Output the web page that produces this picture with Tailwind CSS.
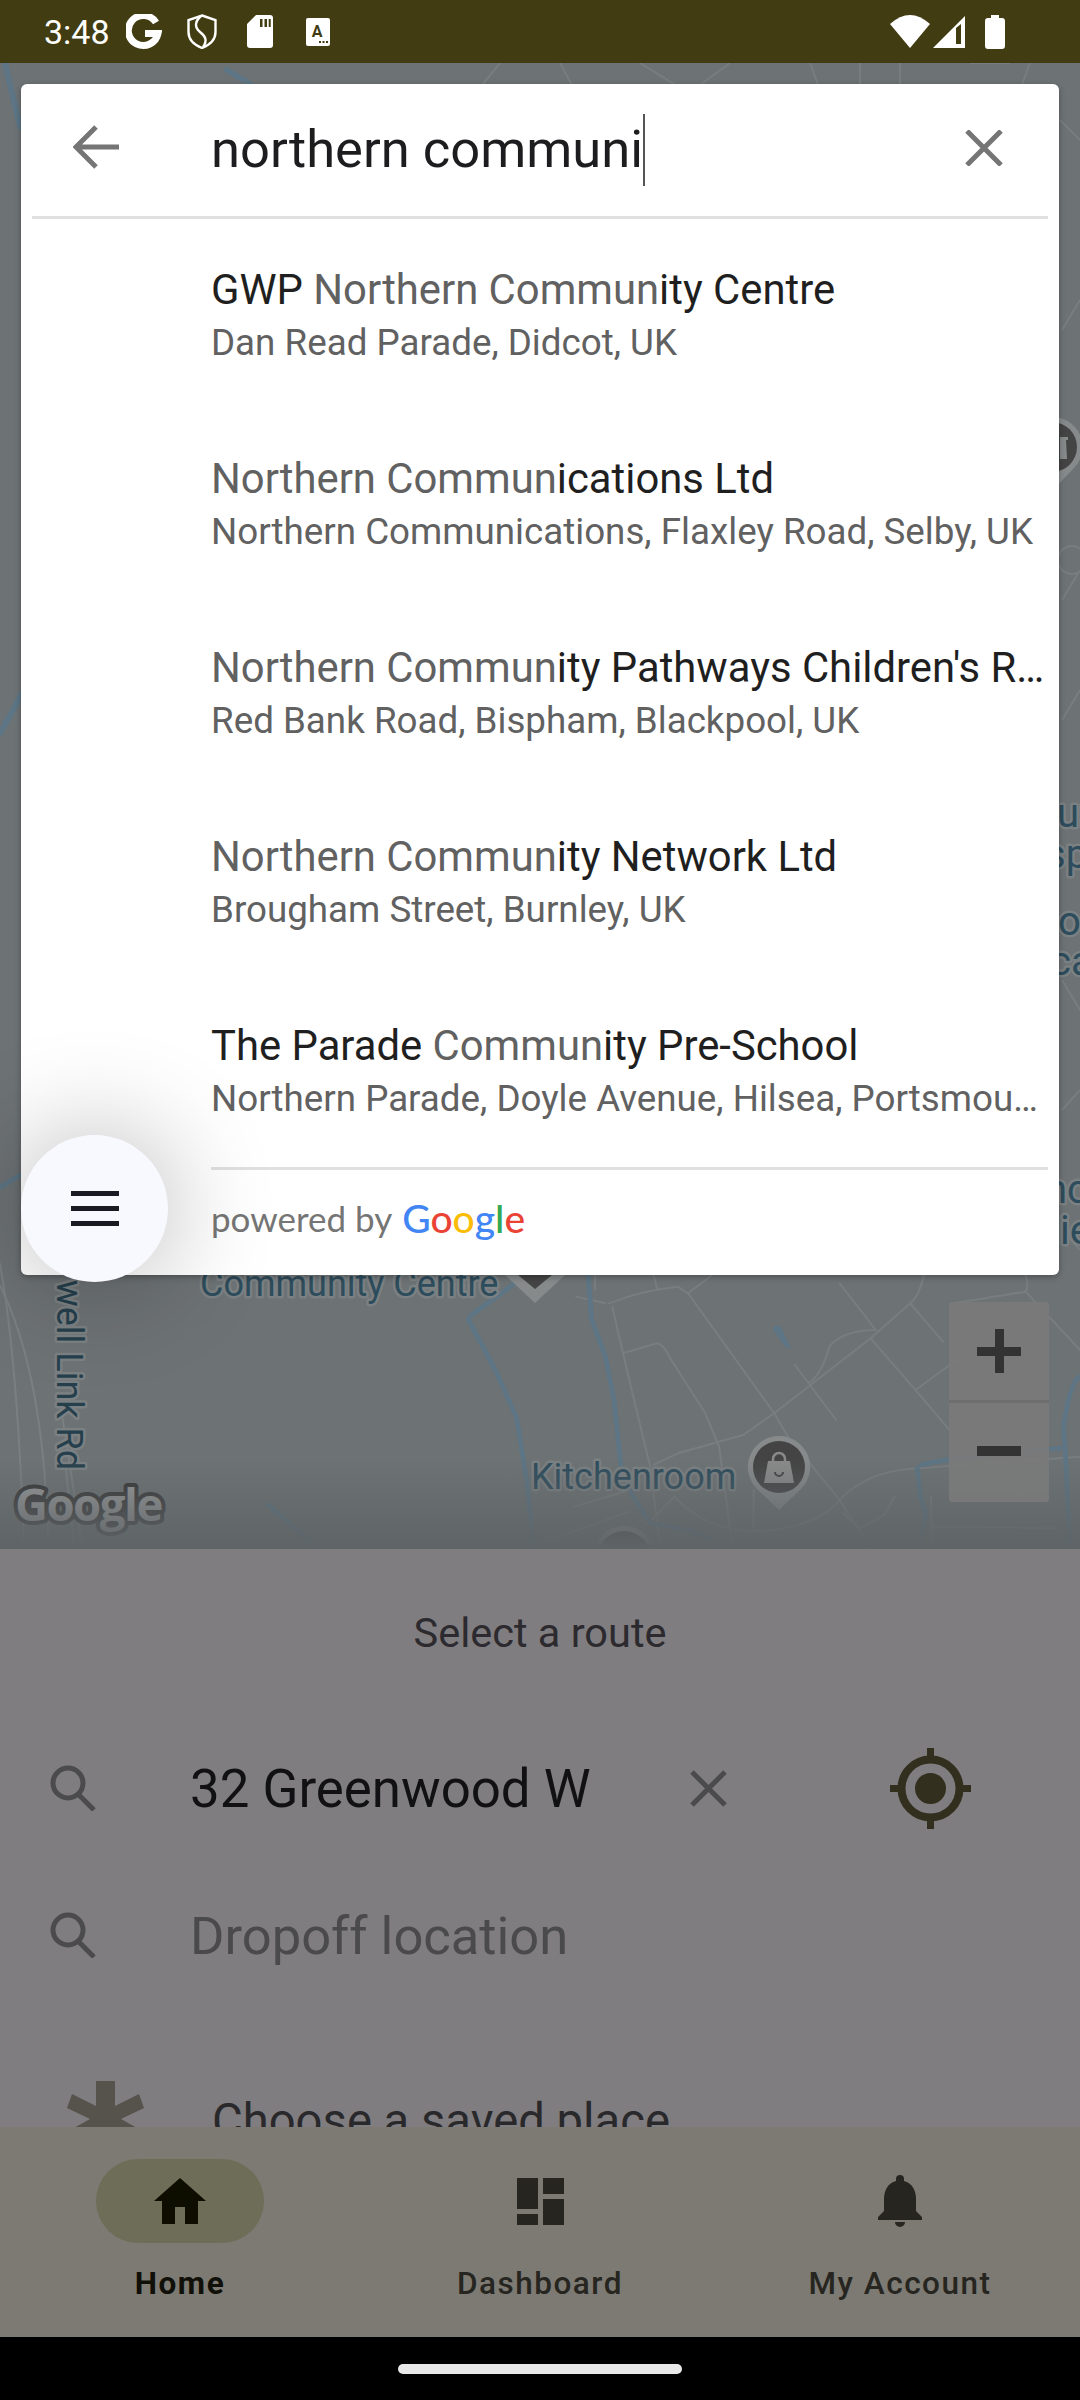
<!DOCTYPE html>
<html><head><meta charset="utf-8"><script src="https://cdn.jsdelivr.net/npm/@tailwindcss/browser@4"></script></head>
<body>
<div class="w-[1080px] h-[2400px] flex flex-col overflow-hidden relative bg-black font-[family-name:Roboto,sans-serif]">
  <!-- status bar -->
  <div class="h-[63px] shrink-0 bg-[#413c12] flex items-center pl-[44px] pr-[75px] text-white">
    <span class="text-[34px] leading-none w-[82px]">3:48</span>
    <svg class="w-[36px] h-[36px]" viewBox="0 0 36 36"><path d="M30 8.500A15 15 0 1 0 32 19.500H19" fill="none" stroke="#fff" stroke-width="7"/></svg>
    <svg class="ml-[25px] w-[30px] h-[35px]" viewBox="0 0 30 35" fill="none" stroke="#fff" stroke-width="2.400"><path d="M15 1.500 28.500 6v12c0 8-6 13-13.500 16C7.500 31 1.500 26 1.500 18V6z"/><path d="M14 2C7 8 8 14 13 18s8 8 3 15"/></svg>
    <svg class="ml-[30px] w-[26px] h-[33px]" viewBox="0 0 26 33"><path fill="#fff" d="M9 0h14a3 3 0 0 1 3 3v27a3 3 0 0 1-3 3H3a3 3 0 0 1-3-3V9z"/><path fill="#413c12" d="M13 4h2.500v8H13zM17.500 4H20v8h-2.500zM21.700 4h2v8h-2z"/></svg>
    <svg class="ml-[33px] w-[24px] h-[28px]" viewBox="0 0 24 28"><rect width="24" height="28" rx="2" fill="#fff"/><text x="11" y="19" text-anchor="middle" font-family="Roboto" font-weight="700" font-size="16" fill="#413c12">A</text><path fill="#413c12" d="M13 23h2v2h-2zM16.500 23h2v2h-2zM20 23h2v2h-2z"/></svg>
    <div class="flex-1"></div>
    <svg class="w-[40px] h-[34px]" viewBox="0 0 40 34"><path fill="#fff" d="M0 9Q20-9 40 9L20 33z"/></svg>
    <svg class="ml-[3px] w-[32px] h-[32px]" viewBox="0 0 32 32"><path fill="#fff" fill-rule="evenodd" d="M0 32 32 0V32zM23 12V28H28V8z"/></svg>
    <svg class="ml-[20px] w-[20px] h-[34px]" viewBox="0 0 20 34"><path fill="#fff" d="M6 0h8v3h3a3 3 0 0 1 3 3v25a3 3 0 0 1-3 3H3a3 3 0 0 1-3-3V6a3 3 0 0 1 3-3h3z"/></svg>
  </div>

  <!-- map -->
  <div class="h-[1486px] shrink-0 relative bg-[#6d7274] overflow-hidden">
    <svg class="absolute inset-0 w-[1080px] h-[1486px]" viewBox="0 63 1080 1486" fill="none">
      <g stroke="#5d7584" stroke-width="6" stroke-linecap="round" stroke-linejoin="round">
        <path d="M5 63 20 127M0 733 12 712 21 695M227 70 250 84"/>
      </g>
      <g stroke="#787d7f" stroke-width="2">
        <path d="M500 63 470 100M560 63 580 100M640 63 700 100M730 63 700 85M810 63 820 90M860 63V90M900 63V90M970 63 1010 63M1030 63 1020 90M1060 120 1080 140M1062 1230 1080 1250M1062 600 1080 570M1062 720 1080 690M1062 330 1080 300M1062 980 1080 1010M1062 1110 1080 1090"/>
      </g>
      <circle cx="1072" cy="560" r="14" stroke="#787d7f" stroke-width="2"/>
      <path fill="#868a8b" d="M1052 417a30 30 0 0 1 22 51L1052 491 1030 468a30 30 0 0 1 22-51z"/><circle cx="1052" cy="447" r="25" fill="#444"/>
      <path fill="#868a8b" d="M1060 437h8v3h-2l1 19h-7z"/>
      <!-- lower right part -->
      <g transform="translate(540 1100) scale(.3444 .3333)" stroke-linecap="round" stroke-linejoin="round">
        <g stroke="#787d7f" stroke-width="6">
          <path d="M430 580 400 560Q300 570 200 610M430 580 680 940 720 1010 870 1200 960 1348M210 620Q240 760 320 1100L350 1348M240 760 340 730Q360 735 375 770L480 940 520 1040 560 1348M500 525 430 580M870 550 975 690M1115 525Q1100 590 1075 610L960 715 680 940 590 1005 400 1060 330 1095M1075 610 1170 725M960 715 1090 870 1230 1040M1090 870 1190 795 1400 680M975 690Q880 690 840 740 820 820 780 850M740 795 860 960M1410 575 1200 610M1410 525Q1420 560 1410 575M1410 575 1568 750M880 1190Q800 1290 620 1295 480 1290 390 1190L310 1275M100 1220 260 1170M0 1330 260 1235M1100 1105Q960 1110 880 1190M1100 1105 1568 1070M1140 1280 1500 1285M1135 1190 1140 1348M1030 1190 1000 1245 930 1285 950 1348M880 1240 930 1285M105 590 190 610M160 525V570M330 525 340 565M620 1170V1295"/>
        </g>
        <g stroke="#5d7584" stroke-width="14">
          <path d="M140 525 150 660 190 770 215 900 235 1100 270 1190 320 1270 430 1290 500 1320 525 1360M1105 1095Q1200 1070 1510 1045M1095 1105 1105 1190 1120 1240 1100 1360M1568 830Q1540 840 1520 980L1525 1050 1540 1360"/>
        </g>
        <path fill="#5d7584" d="M676 690Q680 670 700 680L728 745 715 745z"/>
      </g>
      <!-- lower left part -->
      <g transform="translate(0 1000) scale(.3444 .357)" stroke-linecap="round" stroke-linejoin="round">
        <path stroke="#7a7f81" stroke-width="6" d="M0 740Q50 1000 70 1535M0 800Q130 1050 140 1535M170 1100 240 1535M190 1300 215 1535"/>
        <path stroke="#5d7584" stroke-width="14" d="M1500 790 1365 885M1360 895 1440 1040 1500 1170 1530 1350 1550 1535M780 1415 920 1535M0 525 60 490"/>
      </g>
      <!-- pins -->
      <path fill="#868a8b" d="M779 1436a31 31 0 0 1 22 53L779 1510 757 1489a31 31 0 0 1 22-53z"/>
      <circle cx="779" cy="1467" r="26" fill="#444"/>
      <path fill="#8a8a8a" d="M768 1461h22l4 22h-30z"/><path d="M773 1462v-3a6 6 0 0 1 12 0v3" stroke="#8a8a8a" stroke-width="2.500"/><path d="M775 1472a4 4 0 0 0 8 0" stroke="#444" stroke-width="2"/>
      <circle cx="624" cy="1557" r="31" fill="#868a8b"/><circle cx="624" cy="1557" r="26" fill="#444"/>
      <path fill="#868a8b" d="M505 1275h60l-30 28z"/><path fill="#444" d="M518 1275h34l-17 14z"/>
      <!-- labels -->
      <g font-family="Roboto" fill="#2d4c5c" stroke="#7b8082" stroke-width="5" paint-order="stroke" stroke-linejoin="round" font-size="40">
        <text x="200" y="1296" font-size="36">Community Centre</text>
        <text x="531" y="1489" font-size="36">Kitchenroom</text>
        <text x="1057" y="827">ur</text><text x="1045" y="868">sp</text><text x="1058" y="935">o</text><text x="1050" y="975">ca</text><text x="1045" y="1203">nc</text><text x="1060" y="1244">ie</text>
        <text transform="translate(57 1470) rotate(90)" text-anchor="end" font-size="36" fill="#253f4c">Otterwell Link Rd</text>
      </g>
      <text x="15" y="1521" font-family="Open Sans" font-weight="700" font-size="45.500" letter-spacing="-1.500" fill="#9a9c9c" stroke="#333" stroke-width="8" paint-order="stroke" stroke-linejoin="round">Google</text>
    </svg>
    <div class="absolute left-0 right-0 bottom-0 h-[90px] bg-gradient-to-b from-transparent to-[#5f6467]"></div>

    <!-- zoom controls -->
    <div class="absolute left-[949px] top-[1239px] w-[100px] h-[200px] rounded-[3px] bg-[#7a7a7a]/90 flex flex-col">
      <div class="h-[98px] flex items-center justify-center"><svg class="w-[44px] h-[44px]" viewBox="0 0 44 44"><path fill="#333" d="M18 0h9v18h17v9H27v17h-9V27H0v-9h18z"/></svg></div>
      <div class="h-[3px] bg-[#6e6e6e]"></div>
      <div class="flex-1 flex items-center justify-center pb-[3px]"><div class="w-[44px] h-[10px] bg-[#333]"></div></div>
    </div>

    <!-- search card -->
    <div class="absolute left-[21px] top-[21px] w-[1038px] h-[1191px] bg-white rounded-[6px] shadow-[0_2px_6px_rgba(0,0,0,0.3)] flex flex-col">
      <div class="h-[132px] shrink-0 flex items-center relative">
        <svg class="absolute left-[52px] top-[41px] w-[46px] h-[44px]" viewBox="0 0 46 44" fill="none" stroke="#757575" stroke-width="5"><path d="M46 22H4M23 2 3 22l20 20"/></svg>
        <div class="ml-[190px] text-[52.500px] leading-none text-[#1d1d1f] border-r-2 border-[#555] h-[72px] flex items-center pb-[2px]">northern communi</div>
        <svg class="absolute left-[944px] top-[46px] w-[38px] h-[36px]" viewBox="0 0 38 36" fill="none" stroke="#757575" stroke-width="5"><path d="M2 1 36 35M36 1 2 35"/></svg>
      </div>
      <div class="h-[3px] shrink-0 mx-[11px] bg-[#e0e0e0]"></div>

      <div class="h-[189px] shrink-0 pl-[190px] pr-[11px] pt-[4px] flex flex-col justify-center gap-[8px]">
        <div class="text-[41.800px] leading-[46px] text-[#1f1f1f] truncate">GWP <span class="text-[#616161]">Northern Commun</span>ity Centre</div>
        <div class="text-[36.750px] leading-[44px] text-[#616161] truncate">Dan Read Parade, Didcot, UK</div>
      </div>
      <div class="h-[189px] shrink-0 pl-[190px] pr-[11px] pt-[4px] flex flex-col justify-center gap-[8px]">
        <div class="text-[41.800px] leading-[46px] text-[#1f1f1f] truncate"><span class="text-[#616161]">Northern Commun</span>ications Ltd</div>
        <div class="text-[36.750px] leading-[44px] text-[#616161] truncate">Northern Communications, Flaxley Road, Selby, UK</div>
      </div>
      <div class="h-[189px] shrink-0 pl-[190px] pr-[11px] pt-[4px] flex flex-col justify-center gap-[8px]">
        <div class="text-[41.800px] leading-[46px] text-[#1f1f1f] whitespace-nowrap"><span class="text-[#616161]">Northern Commun</span>ity Pathways Children's R…</div>
        <div class="text-[36.750px] leading-[44px] text-[#616161] truncate">Red Bank Road, Bispham, Blackpool, UK</div>
      </div>
      <div class="h-[189px] shrink-0 pl-[190px] pr-[11px] pt-[4px] flex flex-col justify-center gap-[8px]">
        <div class="text-[41.800px] leading-[46px] text-[#1f1f1f] truncate"><span class="text-[#616161]">Northern Commun</span>ity Network Ltd</div>
        <div class="text-[36.750px] leading-[44px] text-[#616161] truncate">Brougham Street, Burnley, UK</div>
      </div>
      <div class="h-[189px] shrink-0 pl-[190px] pr-[11px] pt-[4px] flex flex-col justify-center gap-[8px]">
        <div class="text-[41.800px] leading-[46px] text-[#1f1f1f] truncate">The Parade <span class="text-[#616161]">Commun</span>ity Pre-School</div>
        <div class="text-[36.750px] leading-[44px] text-[#616161] whitespace-nowrap">Northern Parade, Doyle Avenue, Hilsea, Portsmou…</div>
      </div>
      <div class="h-[3px] shrink-0 mt-[3px] ml-[190px] mr-[11px] bg-[#e0e0e0]"></div>
      <div class="flex-1 pl-[190px] flex items-center gap-[10px] pb-[8px] font-[family-name:Lato,sans-serif]">
        <span class="text-[35px] leading-none text-[#757575]">powered by</span>
        <span class="text-[39px] leading-none font-medium"><span class="text-[#4285f4]">G</span><span class="text-[#ea4335]">o</span><span class="text-[#fbbc05]">o</span><span class="text-[#4285f4]">g</span><span class="text-[#34a853]">l</span><span class="text-[#ea4335]">e</span></span>
      </div>
    </div>

    <!-- floating menu button -->
    <div class="absolute left-[21px] top-[1072px] w-[147px] h-[147px] rounded-full bg-[#f8f8ff] shadow-[0_0_110px_rgba(0,0,0,0.3)] flex flex-col items-center justify-center gap-[10px]">
      <div class="w-[48px] h-[5px] bg-[#1a1a22]"></div>
      <div class="w-[48px] h-[5px] bg-[#1a1a22]"></div>
      <div class="w-[48px] h-[5px] bg-[#1a1a22]"></div>
    </div>
  </div>

  <!-- bottom sheet -->
  <div class="h-[578px] shrink-0 bg-[#7f7d80] relative overflow-hidden flex flex-col">
    <div class="h-[168px] shrink-0 flex items-center justify-center text-[41.500px] text-[#2c2a2e]">Select a route</div>
    <div class="h-[142px] shrink-0 flex items-center pl-[50px]">
      <svg class="w-[46px] h-[46px]" viewBox="0 0 46 46" fill="none" stroke="#4b4a4c" stroke-width="5"><circle cx="18" cy="18" r="15"/><path d="M28 29 44 45"/></svg>
      <div class="ml-[94px] w-[400px] pt-[3px] overflow-hidden whitespace-nowrap text-[52.800px] leading-none text-[#111113]">32 Greenwood W</div>
      <svg class="ml-[100px] w-[37px] h-[37px]" viewBox="0 0 37 37" fill="none" stroke="#4b4a4c" stroke-width="5"><path d="M2 2 35 35M35 2 2 35"/></svg>
      <svg class="ml-[163px] w-[81px] h-[81px]" viewBox="0 0 81 81" fill="none" stroke="#332f1f"><circle cx="40.500" cy="40.500" r="29" stroke-width="8"/><circle cx="40.500" cy="40.500" r="15.500" fill="#332f1f" stroke="none"/><path stroke-width="7" d="M40.500 0v12M40.500 69v12M0 40.500h12M69 40.500h12"/></svg>
    </div>
    <div class="h-[152px] shrink-0 flex items-center pl-[50px]">
      <svg class="w-[46px] h-[46px]" viewBox="0 0 46 46" fill="none" stroke="#4b4a4c" stroke-width="5"><circle cx="18" cy="18" r="15"/><path d="M28 29 44 45"/></svg>
      <div class="ml-[94px] pt-[3px] text-[52.500px] leading-none text-[#4a494b]">Dropoff location</div>
    </div>
    <div class="absolute left-[67px] top-[532px] flex items-start">
      <svg class="w-[77px] h-[60px]" viewBox="0 0 77 60"><path fill="#55534c" d="M29 0H48V25L72 13 77 27 54 38 70 47 57 60H20L7 47 23 38 0 27 5 13 29 25z"/></svg>
      <div class="ml-[68px] mt-[10px] text-[47.200px] leading-[60px] text-[#29282b] whitespace-nowrap">Choose a saved place</div>
    </div>
  </div>

  <!-- nav -->
  <div class="h-[210px] shrink-0 bg-[#7c7a73] relative flex">
    <div class="w-[360px] flex flex-col items-center pt-[32px]">
      <div class="w-[168px] h-[84px] rounded-full bg-[#6e6d57] flex items-center justify-center">
        <svg class="w-[52px] h-[46px]" viewBox="0 0 52 46"><path fill="#0d0d00" d="M26 0 52 23H44V46H31V29H21V46H8V23H0z"/></svg>
      </div>
      <div class="mt-[23px] text-[31.500px] leading-[36px] font-bold tracking-[1.500px] text-[#101008]">Home</div>
    </div>
    <div class="w-[360px] flex flex-col items-center pt-[32px]">
      <div class="h-[84px] flex items-center justify-center">
        <svg class="w-[47px] h-[47px]" viewBox="0 0 47 47"><path fill="#26251f" d="M0 0h21v31H0zM26 0h21v16H26zM26 21h21v26H26zM0 36h21v11H0z"/></svg>
      </div>
      <div class="mt-[23px] text-[31.500px] leading-[36px] font-medium tracking-[1.500px] text-[#26251f]">Dashboard</div>
    </div>
    <div class="w-[360px] flex flex-col items-center pt-[32px]">
      <div class="h-[84px] flex items-center justify-center">
        <svg class="w-[44px] h-[52px]" viewBox="0 0 44 52"><path fill="#26251f" d="M18 4a4 4 0 0 1 8 0v2c8 2 12 9 12 18v12l6 6v3H0v-3l6-6V24C6 15 10 8 18 6zM17 47h10a5 5 0 0 1-10 0z"/></svg>
      </div>
      <div class="mt-[23px] text-[31.500px] leading-[36px] font-medium tracking-[1.500px] text-[#26251f]">My Account</div>
    </div>
  </div>

  <!-- gesture bar -->
  <div class="flex-1 bg-black flex justify-center pt-[27px]">
    <div class="w-[284px] h-[10px] rounded-full bg-[#e8e8e8]"></div>
  </div>
</div>
</body></html>
